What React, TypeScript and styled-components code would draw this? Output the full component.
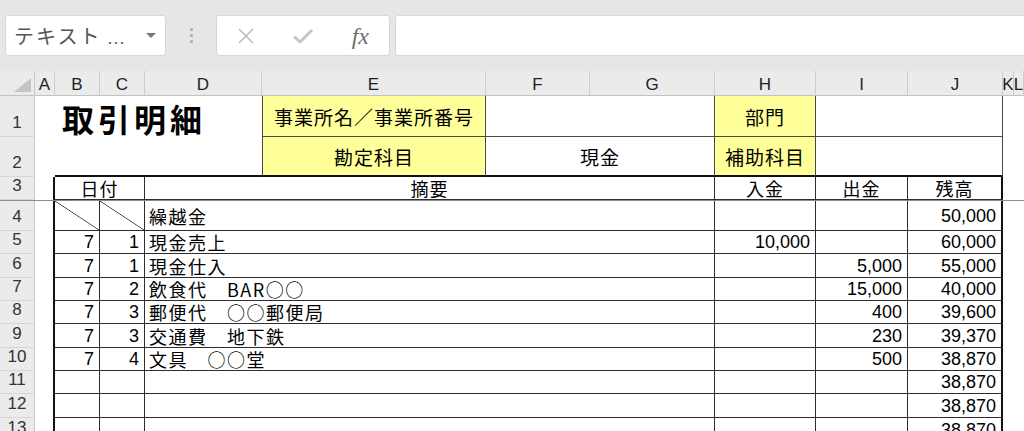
import React from 'react';
import styled, { createGlobalStyle } from 'styled-components';

const GlobalStyle = createGlobalStyle`
    * {
        box-sizing: border-box;
    }

    html, body {
        margin: 0;
        padding: 0;
        background: #FFFFFF;
        overflow: hidden;
    }

    body {
        font-family: "Liberation Sans", "Noto Sans CJK JP", sans-serif;
    }
`;

const COLUMNS = '35px 20px 45px 45px 117px 224px 104px 125px 101px 92px 95px 11px 1fr';
const THIN = '1px solid #2E2E2E';
const THICK = '2px solid #111111';
const TOP_LINE = '1px solid #4A4A4A';
const YELLOW = '#FFFF99';

type Align = 'left' | 'center' | 'right';

interface ICell {
    $span?: number,
    $align?: Align,
    $bg?: string,
    $l?: string,
    $r?: string,
    $t?: string,
    $b?: string
}

const justify = (align?: Align) => align === 'right' ? 'flex-end' : align === 'center' ? 'center' : 'flex-start';

/* ---------- toolbar ---------- */

const Toolbar = styled.div`
    display: flex;
    align-items: center;
    height: 71px;
    padding-left: 5px;
    background-color: #E6E6E6;
`;

const NameBox = styled.div`
    display: flex;
    align-items: center;
    justify-content: space-between;
    width: 161px;
    height: 41px;
    padding: 0 9px 0 8px;
    border: 1px solid #D8D8D8;
    border-radius: 3px;
    background-color: #FFFFFF;
`;

const NameText = styled.span`
    font-family: "Noto Sans CJK JP", sans-serif;
    font-size: 20px;
    letter-spacing: 2px;
    color: #555555;
    white-space: nowrap;
`;

const Ellipsis = styled.span`
    margin-left: 6px;
    font-family: "Liberation Sans", sans-serif;
    font-size: 18px;
    letter-spacing: 1px;
`;

const Caret = styled.span`
    width: 0;
    height: 0;
    border-left: 5px solid transparent;
    border-right: 5px solid transparent;
    border-top: 5px solid #7A7A7A;
`;

const Grip = styled.div`
    display: flex;
    flex-direction: column;
    align-items: center;
    justify-content: center;
    row-gap: 3px;
    width: 50px;
`;

const GripDot = styled.span`
    width: 3px;
    height: 3px;
    border-radius: 50%;
    background-color: #A6A6A6;
`;

const FormulaButtons = styled.div`
    display: grid;
    grid-template-columns: repeat(3, 1fr);
    align-items: center;
    justify-items: center;
    width: 174px;
    height: 41px;
    border: 1px solid #D8D8D8;
    border-radius: 3px;
    background-color: #FFFFFF;
`;

const Fx = styled.span`
    font-family: "Liberation Serif", serif;
    font-style: italic;
    font-size: 24px;
    color: #6E6E6E;
    line-height: 1;
`;

const FormulaInput = styled.div`
    flex: 1;
    height: 41px;
    margin-left: 5px;
    margin-right: -6px;
    border: 1px solid #D8D8D8;
    border-radius: 3px;
    background-color: #FFFFFF;
`;

/* ---------- sheet ---------- */

const SheetRow = styled.div<{ $h: number, $freeze?: boolean }>`
    display: grid;
    grid-template-columns: ${COLUMNS};
    grid-template-rows: minmax(0, 1fr);
    height: ${(props) => props.$h}px;
    border-bottom: ${(props) => props.$freeze ? '1px solid #8C8C8C' : 'none'};
`;

const Corner = styled.div`
    display: flex;
    align-items: flex-end;
    justify-content: flex-end;
    padding: 0 3px 3px 0;
    background-color: #EBEBEB;
    border-right: 1px solid #C8C8C8;
    border-bottom: 1px solid #C2C2C2;
`;

const CornerMark = styled.span`
    width: 0;
    height: 0;
    border-left: 17px solid transparent;
    border-bottom: 14px solid #C4C4C4;
`;

const ColHead = styled.div`
    display: flex;
    align-items: center;
    justify-content: center;
    padding-top: 3px;
    overflow: hidden;
    background-color: #EBEBEB;
    border-right: 1px solid #CDCDCD;
    border-bottom: 1px solid #C2C2C2;
    font-size: 17px;
    color: #1E1E1E;
`;

const RowHead = styled.div`
    display: flex;
    align-items: flex-end;
    justify-content: center;
    padding-bottom: 3px;
    background-color: #EBEBEB;
    border-right: 1px solid #C8C8C8;
    border-bottom: 1px solid #D6D6D6;
    font-size: 17px;
    line-height: 1.1;
    color: #333333;
`;

const Cell = styled.div<ICell>`
    grid-column: span ${(props) => props.$span ?? 1};
    min-width: 0;
    display: flex;
    align-items: center;
    justify-content: ${(props) => justify(props.$align)};
    white-space: nowrap;
    background: ${(props) => props.$bg ?? '#FFFFFF'};
    border-left: ${(props) => props.$l ?? 'none'};
    border-right: ${(props) => props.$r ?? 'none'};
    border-top: ${(props) => props.$t ?? 'none'};
    border-bottom: ${(props) => props.$b ?? 'none'};
    font-size: 18px;
    line-height: 1.1;
    color: #000000;
`;

const Title = styled(Cell)`
    padding: 4px 0 0 7px;
    font-family: "Noto Sans CJK JP", sans-serif;
    font-weight: 700;
    font-size: 32px;
    letter-spacing: 4px;
`;

const Label = styled(Cell)`
    padding-top: 2px;
    font-family: "Noto Sans CJK JP", sans-serif;
    font-size: 19px;
    letter-spacing: 1px;
`;

const Heading = styled(Cell)`
    padding-top: 1px;
    font-family: "Noto Sans CJK JP", sans-serif;
    letter-spacing: 1px;
`;

const Memo = styled(Cell)`
    padding: 2px 0 0 4px;
    font-family: "Noto Sans CJK JP", sans-serif;
    letter-spacing: 1.5px;
`;

const Num = styled(Cell)`
    padding: 2px 5px 0 0;
`;

const Diagonal = styled(Cell)`
    background: linear-gradient(to top right, transparent calc(50% - 0.7px), #333333 50%, transparent calc(50% + 0.7px));
`;

type Entry = {
    n: number,
    h: number,
    m?: string,
    d?: string,
    memo?: string,
    income?: string,
    expense?: string,
    balance?: string,
    diag?: boolean
};

const entries: Entry[] = [
    { n: 4, h: 30, diag: true, memo: '繰越金', balance: '50,000' },
    { n: 5, h: 23, m: '7', d: '1', memo: '現金売上', income: '10,000', balance: '60,000' },
    { n: 6, h: 24, m: '7', d: '1', memo: '現金仕入', expense: '5,000', balance: '55,000' },
    { n: 7, h: 23, m: '7', d: '2', memo: '飲食代　BAR○○', expense: '15,000', balance: '40,000' },
    { n: 8, h: 23, m: '7', d: '3', memo: '郵便代　○○郵便局', expense: '400', balance: '39,600' },
    { n: 9, h: 24, m: '7', d: '3', memo: '交通費　地下鉄', expense: '230', balance: '39,370' },
    { n: 10, h: 23, m: '7', d: '4', memo: '文具　○○堂', expense: '500', balance: '38,870' },
    { n: 11, h: 23, balance: '38,870' },
    { n: 12, h: 24, balance: '38,870' },
    { n: 13, h: 24, balance: '38,870' },
];

const letters = ['A', 'B', 'C', 'D', 'E', 'F', 'G', 'H', 'I', 'J', 'K', 'L'];

const CloseIcon = () => (
    <svg width="18" height="18" viewBox="0 0 18 18">
        <path d="M2 2 L16 16 M16 2 L2 16" stroke="#BDBDBD" strokeWidth="1.6" fill="none" />
    </svg>
);

const CheckIcon = () => (
    <svg width="22" height="16" viewBox="0 0 22 16">
        <path d="M2 8.5 L8 14 L20 2" stroke="#C6C6C6" strokeWidth="3" fill="none" strokeLinejoin="round" />
    </svg>
);

const EntryRow = ({ e }: { e: Entry }) => {
    const Day = e.diag ? Diagonal : Num;

    return (
        <SheetRow $h={e.h}>
            <RowHead>{e.n}</RowHead>
            <Cell $r={THICK} />
            <Day $align="right" $r={THIN} $b={THIN}>{e.m}</Day>
            <Day $align="right" $r={THIN} $b={THIN}>{e.d}</Day>
            <Memo $span={4} $r={THIN} $b={THIN}>{e.memo}</Memo>
            <Num $align="right" $r={THIN} $b={THIN}>{e.income}</Num>
            <Num $align="right" $r={THIN} $b={THIN}>{e.expense}</Num>
            <Num $align="right" $r={THICK} $b={THIN}>{e.balance}</Num>
            <Cell />
            <Cell />
        </SheetRow>
    );
};

const App = () => {
    return (
        <>
            <GlobalStyle />
            <Toolbar>
                <NameBox>
                    <NameText>テキスト<Ellipsis>...</Ellipsis></NameText>
                    <Caret />
                </NameBox>
                <Grip>
                    <GripDot />
                    <GripDot />
                    <GripDot />
                </Grip>
                <FormulaButtons>
                    <CloseIcon />
                    <CheckIcon />
                    <Fx>fx</Fx>
                </FormulaButtons>
                <FormulaInput />
            </Toolbar>

            <SheetRow $h={25}>
                <Corner><CornerMark /></Corner>
                {letters.map((l) => <ColHead key={l}>{l}</ColHead>)}
            </SheetRow>

            <SheetRow $h={41}>
                <RowHead>1</RowHead>
                <Cell />
                <Title $span={3}>取引明細</Title>
                <Label $align="center" $bg={YELLOW} $l={TOP_LINE} $r={TOP_LINE} $b={TOP_LINE}>事業所名／事業所番号</Label>
                <Label $span={2} $r={TOP_LINE} $b={TOP_LINE} />
                <Label $align="center" $bg={YELLOW} $r={TOP_LINE} $b={TOP_LINE}>部門</Label>
                <Label $span={2} $r={TOP_LINE} $b={TOP_LINE} />
                <Cell />
                <Cell />
            </SheetRow>

            <SheetRow $h={40}>
                <RowHead>2</RowHead>
                <Cell />
                <Cell $span={3} $b={THICK} />
                <Label $align="center" $bg={YELLOW} $l={TOP_LINE} $r={TOP_LINE} $b={THICK}>勘定科目</Label>
                <Label $span={2} $align="center" $r={TOP_LINE} $b={THICK}>現金</Label>
                <Label $align="center" $bg={YELLOW} $r={TOP_LINE} $b={THICK}>補助科目</Label>
                <Label $span={2} $r={TOP_LINE} $b={THICK} />
                <Cell />
                <Cell />
            </SheetRow>

            <SheetRow $h={24} $freeze>
                <RowHead>3</RowHead>
                <Cell $r={THICK} />
                <Heading $span={2} $align="center" $r={THIN} $b={THIN}>日付</Heading>
                <Heading $span={4} $align="center" $r={THIN} $b={THIN}>摘要</Heading>
                <Heading $align="center" $r={THIN} $b={THIN}>入金</Heading>
                <Heading $align="center" $r={THIN} $b={THIN}>出金</Heading>
                <Heading $align="center" $r={THICK} $b={THIN}>残高</Heading>
                <Cell />
                <Cell />
            </SheetRow>

            {entries.map((e) => <EntryRow key={e.n} e={e} />)}
        </>
    );
};

export default App;
